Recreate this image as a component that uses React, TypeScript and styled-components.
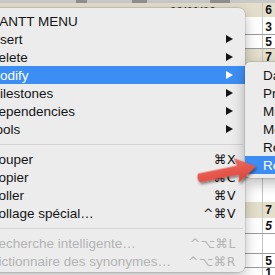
import React from "react";
import styled, { createGlobalStyle } from "styled-components";

const Global = createGlobalStyle`
  html, body { margin: 0; padding: 0; width: 275px; height: 275px; overflow: hidden; background: #ffffff; }
  #root { width: 275px; height: 275px; }
`;

const Stage = styled.div`
  position: relative;
  width: 275px;
  height: 275px;
  overflow: hidden;
  font-family: "Liberation Sans", "DejaVu Sans", sans-serif;
`;

/* ---------- background spreadsheet ---------- */
const Sheet = styled.div`
  display: flex;
  flex-direction: column;
  width: 100%;
  height: 100%;
  background: #ffffff;
`;

const HeaderStrip = styled.div`
  height: 3px;
  flex-shrink: 0;
  display: flex;
  background: #c9c9c9;
`;

const Seg = styled.div<{ $l: number; $w: number }>`
  margin-left: ${(p) => p.$l}px;
  width: ${(p) => p.$w}px;
  background: #8f8f8f;
`;

type Tone = "beige" | "white" | "cell";

const SheetRow = styled.div<{ $h: number; $tone: Tone }>`
  height: ${(p) => p.$h}px;
  flex-shrink: 0;
  display: flex;
  box-sizing: border-box;
  background: ${(p) => (p.$tone === "beige" ? "#e4dfcb" : "#ffffff")};
  border-bottom: ${(p) => (p.$tone === "cell" ? "1px solid #9c9c9c" : "none")};
`;

const Lead = styled.div`
  flex: 1;
  display: flex;
  align-items: flex-start;
`;

const DateText = styled.span`
  margin-left: 170px;
  margin-top: 2px;
  font-size: 11px;
  font-weight: bold;
  color: #3a3a3a;
  letter-spacing: 0.5px;
`;

const NumCell = styled.div<{ $italic?: boolean }>`
  width: 13px;
  box-sizing: border-box;
  padding-right: 3px;
  display: flex;
  align-items: center;
  justify-content: flex-end;
  font-size: 12px;
  font-weight: bold;
  font-style: ${(p) => (p.$italic ? "italic" : "normal")};
  color: #111111;
  border-left: 1px solid #c4c4c4;
`;

/* ---------- main context menu ---------- */
const MainMenu = styled.div`
  position: absolute;
  left: -20px;
  top: 8px;
  width: 265px;
  box-sizing: border-box;
  padding: 4px 0 2px;
  background: #ececec;
  border-radius: 6px;
  box-shadow: 0 0 0 0.5px rgba(0, 0, 0, 0.2), 0 5px 14px rgba(0, 0, 0, 0.28);
`;

const Item = styled.div<{ $active?: boolean; $disabled?: boolean }>`
  height: 18px;
  display: flex;
  align-items: center;
  padding: 0 9px 0 8.7px;
  font-size: 13.5px;
  white-space: nowrap;
  color: ${(p) => (p.$active ? "#ffffff" : p.$disabled ? "#b3b3b3" : "#141414")};
  background: ${(p) => (p.$active ? "#3d8ef4" : "transparent")};
`;

const Label = styled.span`
  flex: 1;
`;

const Shortcut = styled.span`
  font-family: "DejaVu Sans", "Liberation Sans", sans-serif;
  font-size: 12.5px;
  letter-spacing: 0.5px;
`;

const SubArrow = styled.span`
  width: 0;
  height: 0;
  margin-right: 3px;
  border-top: 4px solid transparent;
  border-bottom: 4px solid transparent;
  border-left: 7px solid currentColor;
`;

const Separator = styled.div`
  height: 12px;
  display: flex;
  align-items: center;
  &::after {
    content: "";
    flex: 1;
    height: 1px;
    margin-right: 2px;
    background: #d3d3d3;
  }
`;

/* ---------- sub menu ---------- */
const SubMenu = styled.div`
  position: absolute;
  left: 245px;
  top: 62px;
  width: 90px;
  box-sizing: border-box;
  padding: 4px 0;
  background: #ececec;
  border-radius: 5px;
  box-shadow: 0 0 0 0.5px rgba(0, 0, 0, 0.2), 0 5px 14px rgba(0, 0, 0, 0.28);
`;

const SubItem = styled.div<{ $active?: boolean }>`
  height: 18px;
  display: flex;
  align-items: center;
  padding-left: 18px;
  font-size: 13.5px;
  white-space: nowrap;
  color: ${(p) => (p.$active ? "#ffffff" : "#141414")};
  background: ${(p) => (p.$active ? "#3d8ef4" : "transparent")};
`;

const Pointer = styled.svg`
  position: absolute;
  left: 0;
  top: 0;
  width: 275px;
  height: 275px;
  pointer-events: none;
`;

type MenuEntry =
  | { kind: "item"; label: string; sub?: boolean; active?: boolean; shortcut?: string; disabled?: boolean }
  | { kind: "sep" };

const entries: MenuEntry[] = [
  { kind: "item", label: "GANTT MENU" },
  { kind: "item", label: "Insert", sub: true },
  { kind: "item", label: "Delete", sub: true },
  { kind: "item", label: "Modify", sub: true, active: true },
  { kind: "item", label: "Milestones", sub: true },
  { kind: "item", label: "Dependencies", sub: true },
  { kind: "item", label: "Tools", sub: true },
  { kind: "sep" },
  { kind: "item", label: "Couper", shortcut: "⌘X" },
  { kind: "item", label: "Copier", shortcut: "⌘C" },
  { kind: "item", label: "Coller", shortcut: "⌘V" },
  { kind: "item", label: "Collage spécial…", shortcut: "^⌘V" },
  { kind: "sep" },
  { kind: "item", label: "Recherche intelligente…", shortcut: "^⌥⌘L", disabled: true },
  { kind: "item", label: "Dictionnaire des synonymes…", shortcut: "^⌥⌘R", disabled: true },
];

const subEntries = ["Dates", "Progress", "Milestone", "Move", "Resources", "Rename"];

type SheetLine = { h: number; tone: Tone; num?: string; italic?: boolean; date?: boolean };

const sheetLines: SheetLine[] = [
  { h: 14, tone: "beige", num: "6", date: true },
  { h: 3, tone: "white" },
  { h: 15, tone: "cell", num: "3" },
  { h: 14, tone: "cell", num: "5" },
  { h: 15, tone: "beige", num: "7" },
  { h: 138, tone: "white" },
  { h: 16, tone: "beige", num: "7" },
  { h: 16, tone: "cell", num: "5", italic: true },
  { h: 20, tone: "cell" },
  { h: 14, tone: "cell", num: "5" },
  { h: 10, tone: "white", num: "1" },
];

export default function App() {
  return (
    <Stage>
      <Global />
      <Sheet>
        <HeaderStrip>
          <Seg $l={76} $w={11} />
          <Seg $l={45} $w={15} />
          <Seg $l={63} $w={20} />
        </HeaderStrip>
        {sheetLines.map((r, i) => (
          <SheetRow key={i} $h={r.h} $tone={r.tone}>
            <Lead>{r.date && <DateText>00/11/10</DateText>}</Lead>
            <NumCell $italic={r.italic}>{r.num}</NumCell>
          </SheetRow>
        ))}
      </Sheet>

      <MainMenu>
        {entries.map((e, i) =>
          e.kind === "sep" ? (
            <Separator key={i} />
          ) : (
            <Item key={i} $active={e.active} $disabled={e.disabled}>
              <Label>{e.label}</Label>
              {e.sub && <SubArrow />}
              {e.shortcut && <Shortcut>{e.shortcut}</Shortcut>}
            </Item>
          )
        )}
      </MainMenu>

      <SubMenu>
        {subEntries.map((s, i) => (
          <SubItem key={s} $active={i === subEntries.length - 1}>
            {s}
          </SubItem>
        ))}
      </SubMenu>

      <Pointer viewBox="0 0 275 275">
        <defs>
          <linearGradient id="arrowFill" x1="0" y1="0" x2="0" y2="1">
            <stop offset="0" stopColor="#f06a5c" />
            <stop offset="1" stopColor="#d9443a" />
          </linearGradient>
          <filter id="arrowShadow" x="-30%" y="-50%" width="160%" height="200%">
            <feDropShadow dx="1" dy="2" stdDeviation="1.5" floodColor="#000" floodOpacity="0.55" />
          </filter>
        </defs>
        <g transform="translate(199 178) rotate(-11.5)" filter="url(#arrowShadow)">
          <path
            d="M0,-4.5 L40,-4.5 L38,-12.5 L58,0 L38,12.5 L40,4.5 L0,4.5 Q-3,0 0,-4.5 Z"
            fill="url(#arrowFill)"
            strokeLinejoin="round"
          />
        </g>
      </Pointer>
    </Stage>
  );
}
